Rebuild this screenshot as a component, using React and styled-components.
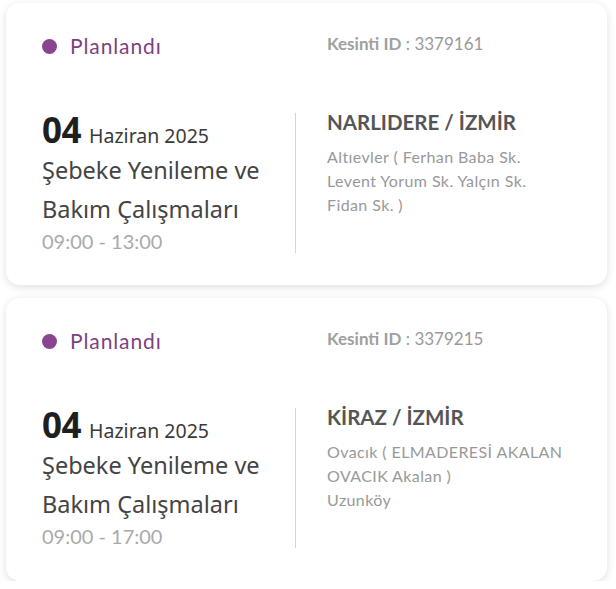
import React from "react";
import styled, { createGlobalStyle } from "styled-components";

const Global = createGlobalStyle`
  html, body { margin: 0; padding: 0; background: #ffffff; }
  body { font-family: "Open Sans", "Noto Sans", sans-serif; }
  * { box-sizing: border-box; }
`;

const List = styled.div`
  display: flex;
  flex-direction: column;
  gap: 13px;
  padding: 3px 9px 0 6px;
`;

const Card = styled.div`
  background: #fff;
  border-radius: 14px;
  box-shadow: 0 2px 9px rgba(0, 0, 0, 0.13);
  padding: 31px 36px 30px 36px;
  height: ${(p) => p.h}px;
`;

const Row = styled.div`
  display: grid;
  grid-template-columns: 254px 1fr;
`;

const Status = styled.div`
  display: flex;
  align-items: center;
  gap: 13px;
  font-family: "Lato", sans-serif;
  font-size: 21px;
  letter-spacing: 0.9px;
  line-height: 24px;
  color: #7d3f82;
`;

const Dot = styled.span`
  width: 15px;
  height: 15px;
  border-radius: 50%;
  background: #8a4590;
`;

const IdText = styled.div`
  padding-left: 31px;
  font-family: "Lato", sans-serif;
  font-size: 17px;
  line-height: 24px;
  color: #9a9a9a;
  margin-top: -2px;
  b { font-weight: 700; color: #a0a0a0; }
`;

const Body = styled(Row)`
  margin-top: 55px;
`;

const Left = styled.div`
  border-right: 1px solid #d4d4d4;
`;

const DateLine = styled.div`
  display: flex;
  align-items: baseline;
  gap: 8px;
  line-height: 33px;
  color: #222;
`;

const Day = styled.span`
  font-family: "Noto Sans", sans-serif;
  font-weight: 700;
  font-size: 35px;
  letter-spacing: -0.5px;
  color: #1f1f1f;
`;

const Month = styled.span`
  font-family: "Noto Sans", sans-serif;
  font-size: 19.5px;
  color: #3a3a3a;
`;

const Title = styled.div`
  font-family: "Noto Sans", sans-serif;
  font-size: 23.5px;
  line-height: 39px;
  color: #444;
  margin-top: -1px;
`;

const Time = styled.div`
  font-family: "Lato", sans-serif;
  font-size: 20px;
  line-height: 24px;
  color: #aaa;
`;

const Right = styled.div`
  padding-left: 31px;
`;

const Place = styled.div`
  font-family: "Lato", sans-serif;
  font-weight: 700;
  font-size: 20.5px;
  line-height: 24px;
  color: #555;
  margin-top: -3px;
`;

const Address = styled.div`
  margin-top: 11px;
  font-family: "Lato", sans-serif;
  font-size: 16px;
  letter-spacing: 0.4px;
  line-height: 24px;
  color: #999;
`;

const data = [
  {
    id: "3379161",
    time: "09:00 - 13:00",
    place: "NARLIDERE / İZMİR",
    lines: ["Altıevler ( Ferhan Baba Sk.", "Levent Yorum Sk. Yalçın Sk.", "Fidan Sk. )"],
    h: 282,
  },
  {
    id: "3379215",
    time: "09:00 - 17:00",
    place: "KİRAZ / İZMİR",
    lines: ["Ovacık ( ELMADERESİ AKALAN", "OVACIK Akalan )", "Uzunköy"],
    h: 283,
  },
];

export default function App() {
  return (
    <>
      <Global />
      <List>
        {data.map((d) => (
          <Card key={d.id} h={d.h}>
            <Row>
              <Status>
                <Dot />
                Planlandı
              </Status>
              <IdText>
                <b>Kesinti ID</b> : {d.id}
              </IdText>
            </Row>
            <Body>
              <Left>
                <DateLine>
                  <Day>04</Day>
                  <Month>Haziran 2025</Month>
                </DateLine>
                <Title>
                  Şebeke Yenileme ve
                  <br />
                  Bakım Çalışmaları
                </Title>
                <Time>{d.time}</Time>
              </Left>
              <Right>
                <Place>{d.place}</Place>
                <Address>
                  {d.lines.map((l) => (
                    <div key={l}>{l}</div>
                  ))}
                </Address>
              </Right>
            </Body>
          </Card>
        ))}
      </List>
    </>
  );
}
